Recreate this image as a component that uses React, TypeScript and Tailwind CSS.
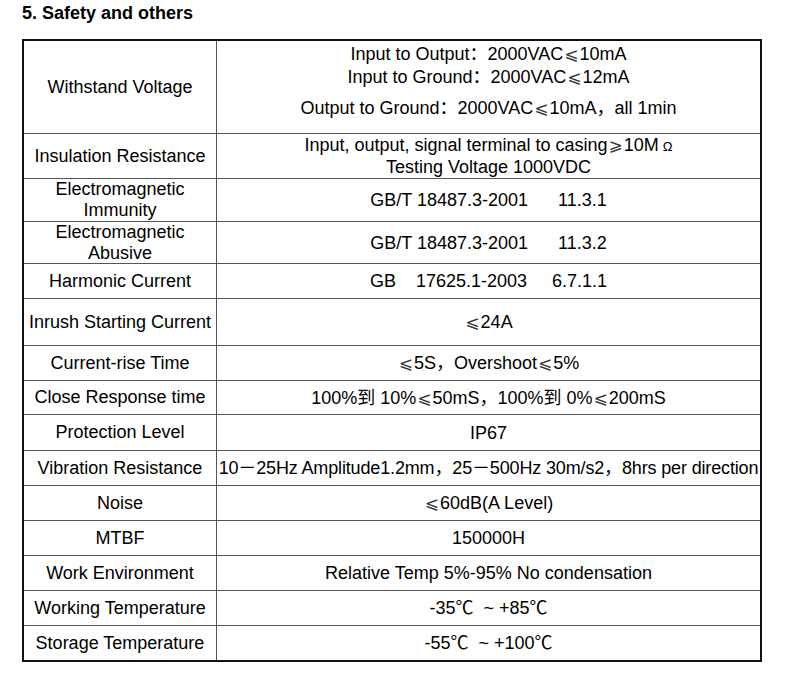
import React from "react";

const C = ({ children }: { children: React.ReactNode }) => (
  <span className="font-['Noto_Sans_CJK_SC',sans-serif] leading-none">{children}</span>
);

const L = () => (
  <span className="font-['DejaVu_Sans',sans-serif] text-[17px] leading-none text-[#333] mx-[1px]">⩽</span>
);
const G = () => (
  <span className="font-['DejaVu_Sans',sans-serif] text-[17px] leading-none text-[#333] mx-[1px]">⩾</span>
);

type Row = { h: string; left: React.ReactNode; right: React.ReactNode; last?: boolean };

const rows: Row[] = [
  {
    h: "h-[45px]",
    left: "Insulation Resistance",
    right: (
      <>
        <div>
          Input, output, signal terminal to casing<G />10M
          <span className="ml-[4px] text-[13px] leading-none">Ω</span>
        </div>
        <div>Testing Voltage 1000VDC</div>
      </>
    ),
  },
  {
    h: "h-[43px]",
    left: (
      <>
        <div>Electromagnetic</div>
        <div>Immunity</div>
      </>
    ),
    right: <div className="whitespace-pre">GB/T 18487.3-2001      11.3.1</div>,
  },
  {
    h: "h-[42px]",
    left: (
      <>
        <div>Electromagnetic</div>
        <div>Abusive</div>
      </>
    ),
    right: <div className="whitespace-pre">GB/T 18487.3-2001      11.3.2</div>,
  },
  {
    h: "h-[35px]",
    left: "Harmonic Current",
    right: <div className="whitespace-pre">GB    17625.1-2003     6.7.1.1</div>,
  },
  {
    h: "h-[47px]",
    left: "Inrush Starting Current",
    right: (
      <div>
        <L />24A
      </div>
    ),
  },
  {
    h: "h-[35px]",
    left: "Current-rise Time",
    right: (
      <div>
        <L />5S，Overshoot<L />5%
      </div>
    ),
  },
  {
    h: "h-[34px]",
    left: "Close Response time",
    right: (
      <div>
        100%到 10%<L />50mS，100%到 0%<L />200mS
      </div>
    ),
  },
  { h: "h-[36px]", left: "Protection Level", right: "IP67" },
  {
    h: "h-[35px]",
    left: "Vibration Resistance",
    right: (
      <div className="whitespace-nowrap tracking-[-0.15px]">
        10－25Hz Amplitude1.2mm，25－500Hz 30m/s2，8hrs per direction
      </div>
    ),
  },
  {
    h: "h-[35px]",
    left: "Noise",
    right: (
      <div>
        <L />60dB(A Level)
      </div>
    ),
  },
  { h: "h-[35px]", left: "MTBF", right: "150000H" },
  {
    h: "h-[35px]",
    left: "Work Environment",
    right: "Relative Temp 5%-95% No condensation",
  },
  {
    h: "h-[35px]",
    left: "Working Temperature",
    right: (
      <div className="whitespace-pre">
        -35<C>℃</C>  ~ +85<C>℃</C>
      </div>
    ),
  },
  {
    h: "h-[34px]",
    left: "Storage Temperature",
    right: (
      <div className="whitespace-pre">
        -55<C>℃</C>  ~ +100<C>℃</C>
      </div>
    ),
    last: true,
  },
];

export default function App() {
  return (
    <div className="w-[788px] h-[674px] bg-white text-black font-['Liberation_Sans','Noto_Sans_CJK_SC','DejaVu_Sans',sans-serif]">
      <div className="h-[39px] pt-[2px] pl-[22px] text-[18px] font-bold leading-[22px]">
        5. Safety and others
      </div>
      <div className="ml-[22px] w-[740px] border-2 border-[#111] text-[18px]">
        <div className="flex h-[93px] border-b border-[#555]">
          <div className="w-[193px] shrink-0 border-r border-[#555] flex items-center justify-center text-center leading-[22px]">
            Withstand Voltage
          </div>
          <div className="flex-1 flex flex-col items-center pt-[2px] text-center leading-[23px]">
            <div>
              Input to Output：2000VAC<L />10mA
            </div>
            <div>
              Input to Ground：2000VAC<L />12mA
            </div>
            <div className="mt-[8px]">
              Output to Ground：2000VAC<L />10mA，all 1min
            </div>
          </div>
        </div>
        {rows.map((r, i) => (
          <div
            key={i}
            className={`flex ${r.h} ${r.last ? "" : "border-b border-[#555]"}`}
          >
            <div className="w-[193px] shrink-0 border-r border-[#555] flex flex-col items-center justify-center text-center leading-[21px]">
              {r.left}
            </div>
            <div className="flex-1 min-w-0 flex flex-col items-center justify-center text-center leading-[22px]">
              {r.right}
            </div>
          </div>
        ))}
      </div>
    </div>
  );
}
